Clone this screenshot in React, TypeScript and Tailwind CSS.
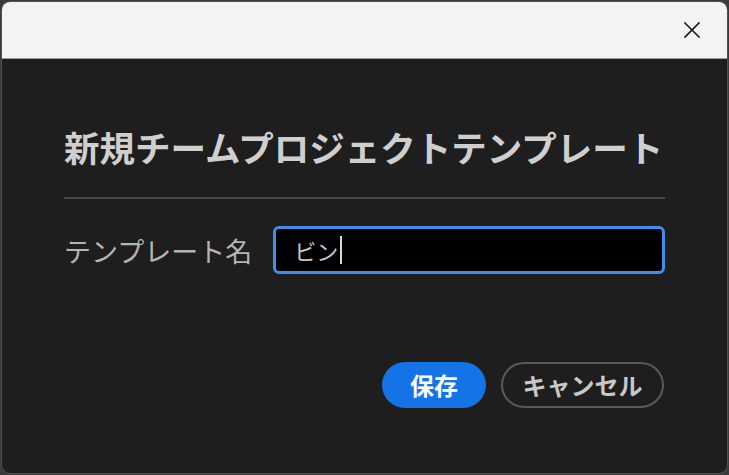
import React from "react";

export default function App() {
  return (
    <div
      className="w-[729px] h-[475px] bg-[#3a3a3a] p-px overflow-hidden"
      style={{ fontFamily: '"Noto Sans CJK JP", "Noto Sans", sans-serif' }}
    >
      <div className="w-full h-full rounded-[9px] overflow-hidden border border-[#505050] bg-[#1e1e1e] flex flex-col">
        <div className="h-[57px] bg-[#f3f3f3] border-b border-[#9a9a9a] flex items-center justify-end pr-[26px] shrink-0">
          <svg width="18" height="18" viewBox="0 0 18 18" className="mt-[-1px]">
            <path d="M2 2 L16 16 M16 2 L2 16" stroke="#1a1a1a" strokeWidth="1.6" strokeLinecap="square" />
          </svg>
        </div>
        <div className="flex-1 px-[62px] flex flex-col">
          <div className="mt-[66px] h-[44px] flex items-center text-[35.5px] font-bold text-[#cfcfcf] leading-none">
            新規チームプロジェクトテンプレート
          </div>
          <div className="mt-[28px] h-[2px] bg-[#474747] w-[601px]" />
          <div className="mt-[27px] flex items-center">
            <div className="text-[27px] text-[#b4b4b4] leading-none w-[210px]">テンプレート名</div>
            <div className="w-[393px] h-[48px] rounded-[6px] border-[3px] border-[#3f8ee9] bg-black flex items-center pl-[18px]">
              <span className="text-[22px] text-[#c8c8c8] leading-none">ビン</span>
              <span className="w-[2px] h-[28px] bg-[#d8d8d8] ml-[2px]" />
            </div>
          </div>
          <div className="mt-[88px] flex justify-end gap-[15px] pr-[1px]">
            <button className="w-[104px] h-[46px] rounded-full bg-[#1473e6] text-white font-bold text-[24px] leading-none flex items-center justify-center">
              保存
            </button>
            <button className="w-[163px] h-[46px] rounded-full border-[2px] border-[#5a5a5a] text-[#c8c8c8] font-bold text-[24px] leading-none flex items-center justify-center">
              キャンセル
            </button>
          </div>
        </div>
      </div>
    </div>
  );
}
